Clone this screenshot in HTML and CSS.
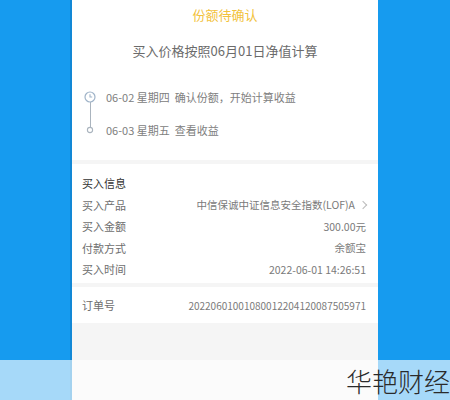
FILE: index.html
```html
<!DOCTYPE html>
<html lang="zh-CN">
<head>
    <meta charset="UTF-8">
    <meta name="viewport" content="width=device-width, initial-scale=1.0">
    <title>交易详情</title>
    <link rel="stylesheet" href="styles.css">
</head>
<body>
    <div class="phone">
        <div class="section status">
            <div class="status-title">份额待确认</div>
            <div class="status-sub">买入价格按照06月01日净值计算</div>
            <div class="timeline">
                <div class="step">
                    <span class="dot">
                        <svg width="12" height="12" viewBox="0 0 12 12">
                            <circle cx="6" cy="6" r="5" fill="#fff" stroke="#9fb3c8" stroke-width="1.2"/>
                            <path d="M6 3.2V6H8.2" fill="none" stroke="#9fb3c8" stroke-width="1.1"/>
                        </svg>
                    </span>
                    <span>06-02 星期四&nbsp;&nbsp;确认份额，开始计算收益</span>
                </div>
                <div class="step">
                    <span class="dot">
                        <svg width="12" height="12" viewBox="0 0 12 12">
                            <circle cx="6" cy="6" r="2.6" fill="#fff" stroke="#aab4be" stroke-width="1.1"/>
                        </svg>
                    </span>
                    <span>06-03 星期五&nbsp;&nbsp;查看收益</span>
                </div>
                <div class="line"></div>
            </div>
        </div>

        <div class="section info">
            <div class="info-head">买入信息</div>
            <div class="row">
                <span class="label">买入产品</span>
                <span class="value">中信保诚中证信息安全指数(LOF)A<i class="arrow"></i></span>
            </div>
            <div class="row">
                <span class="label">买入金额</span>
                <span class="value">300.00元</span>
            </div>
            <div class="row">
                <span class="label">付款方式</span>
                <span class="value">余额宝</span>
            </div>
            <div class="row">
                <span class="label">买入时间</span>
                <span class="value">2022-06-01 14:26:51</span>
            </div>
        </div>

        <div class="section order">
            <div class="row">
                <span class="label">订单号</span>
                <span class="value small">20220601001080012204120087505971</span>
            </div>
        </div>
    </div>

    <div class="mark">
        <span>华艳财经</span>
    </div>
</body>
</html>
```

FILE: styles.css
```css
body {
    margin: 0;
    height: 400px;
    overflow: hidden;
    background-color: #169bef;
    font-family: "Noto Sans CJK SC", "Noto Sans", sans-serif;
    position: relative;
}
.phone {
    width: 306px;
    height: 400px;
    margin-left: 72px;
    background-color: #f5f5f5;
    box-shadow: -2px 0 0 #1288d6;
    display: flex;
    flex-direction: column;
    gap: 4px;
}
.section {
    background-color: #fff;
}
.status {
    height: 160px;
    text-align: center;
}
.status-title {
    padding-top: 6px;
    font-size: 13px;
    line-height: 18px;
    color: #f2c23c;
}
.status-sub {
    margin-top: 17px;
    font-size: 13px;
    line-height: 20px;
    color: #6b6b6b;
}
.timeline {
    position: relative;
    margin-top: 19px;
    padding-left: 12px;
    text-align: left;
}
.step {
    display: flex;
    align-items: center;
    gap: 10px;
    height: 33px;
    font-size: 11px;
    color: #808080;
}
.dot {
    position: relative;
    z-index: 1;
    display: flex;
    width: 12px;
    height: 12px;
}
.line {
    position: absolute;
    left: 17.5px;
    top: 22px;
    width: 1px;
    height: 27px;
    background-color: #aab4be;
}
.info {
    height: 119px;
    padding: 9px 12px 0 10px;
    box-sizing: border-box;
}
.info-head {
    font-size: 11px;
    line-height: 21px;
    color: #333;
}
.row {
    display: flex;
    justify-content: space-between;
    align-items: center;
    height: 21.5px;
    font-size: 11px;
    color: #6e6e6e;
}
.value {
    font-size: 10.5px;
    color: #7a7a7a;
    display: flex;
    align-items: center;
}
.value.small {
    font-size: 10px;
}
.arrow {
    width: 5px;
    height: 5px;
    margin-left: 5px;
    border-top: 1px solid #bbb;
    border-right: 1px solid #bbb;
    transform: rotate(45deg);
}
.order {
    height: 36px;
    padding: 0 12px 0 10px;
    display: flex;
    align-items: center;
}
.order .row {
    flex: 1;
}
.mark {
    position: absolute;
    left: 0;
    right: 0;
    bottom: 0;
    height: 40px;
    background-color: rgba(255, 255, 255, 0.62);
    display: flex;
    justify-content: flex-end;
    align-items: center;
}
.mark span {
    font-size: 26px;
    font-weight: 300;
    color: #2a2a2a;
}
```
